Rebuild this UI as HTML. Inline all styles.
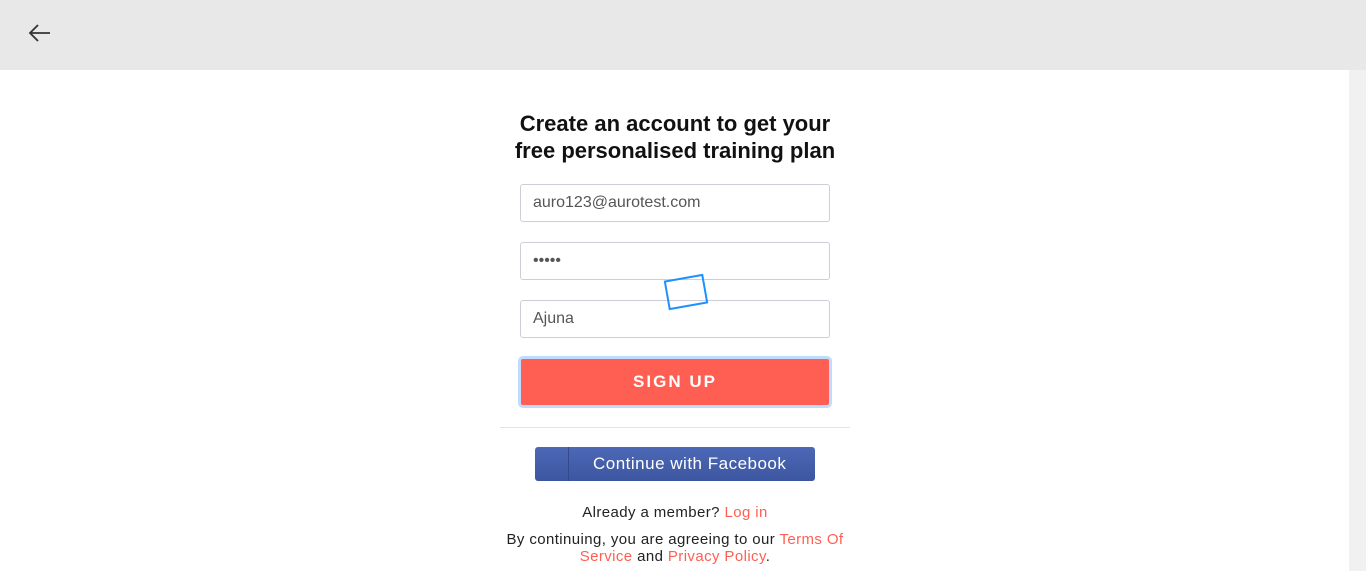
<!DOCTYPE html>
<html><head><meta charset="utf-8"><style>
*{box-sizing:border-box;margin:0;padding:0}
body{width:1366px;height:571px;overflow:hidden;background:#fff;font-family:"Liberation Sans",sans-serif;position:relative}
.top{position:absolute;left:0;top:0;width:1366px;height:70px;background:#e8e8e8}
.sb{position:absolute;right:0;top:70px;width:17px;height:501px;background:#f1f1f1}
h1{position:absolute;left:473px;width:404px;top:110px;text-align:center;font-size:22px;line-height:27px;font-weight:bold;color:#111}
.in{position:absolute;left:520px;width:310px;height:38px;border:1px solid #ccd0d6;border-radius:3px;font-size:16px;color:#555;padding-left:12px;line-height:36px}
.btn{position:absolute;left:518px;top:356px;width:314px;height:52px;border:3px solid #bfdcff;border-radius:5px;background:#ff5f52;color:#fff;font-weight:bold;font-size:17px;letter-spacing:2px;text-align:center;line-height:46px}
.hr{position:absolute;left:500px;width:350px;top:427px;border-top:1px solid #e3e3e3}
.fb{position:absolute;left:535px;top:447px;width:280px;height:34px;border-radius:3px;background:linear-gradient(#4c68b6,#3d56a0);color:#fff;font-size:17px;line-height:34px;padding-left:58px;letter-spacing:.5px}
.fb:before{content:"";position:absolute;left:33px;top:0;height:34px;border-left:1px solid #34498a}
.t{position:absolute;left:473px;width:404px;text-align:center;font-size:15px;color:#222;line-height:17px;letter-spacing:.4px}
.r{color:#ff5f52}
.sq{position:absolute;left:666px;top:277px;width:40px;height:30px;border:2px solid #1e90ff;transform:rotate(-10deg)}
</style></head><body>
<div class="top"><svg style="position:absolute;left:28px;top:23px" width="24" height="20" viewBox="0 0 24 20"><path d="M22 10H2M10 2L2 10l8 8" fill="none" stroke="#333" stroke-width="1.8"/></svg></div>
<div class="sb"></div>
<h1>Create an account to get your<br>free personalised training plan</h1>
<div class="in" style="top:184px">auro123@aurotest.com</div>
<div class="in" style="top:242px">•••••</div>
<div class="in" style="top:300px">Ajuna</div>
<div class="sq"></div>
<div class="btn">SIGN UP</div>
<div class="hr"></div>
<div class="fb">Continue with Facebook</div>
<div class="t" style="top:504px">Already a member? <span class="r">Log in</span></div>
<div class="t" style="top:531px">By continuing, you are agreeing to our <span class="r">Terms Of<br>Service</span> and <span class="r">Privacy Policy</span>.</div>
</body></html>
